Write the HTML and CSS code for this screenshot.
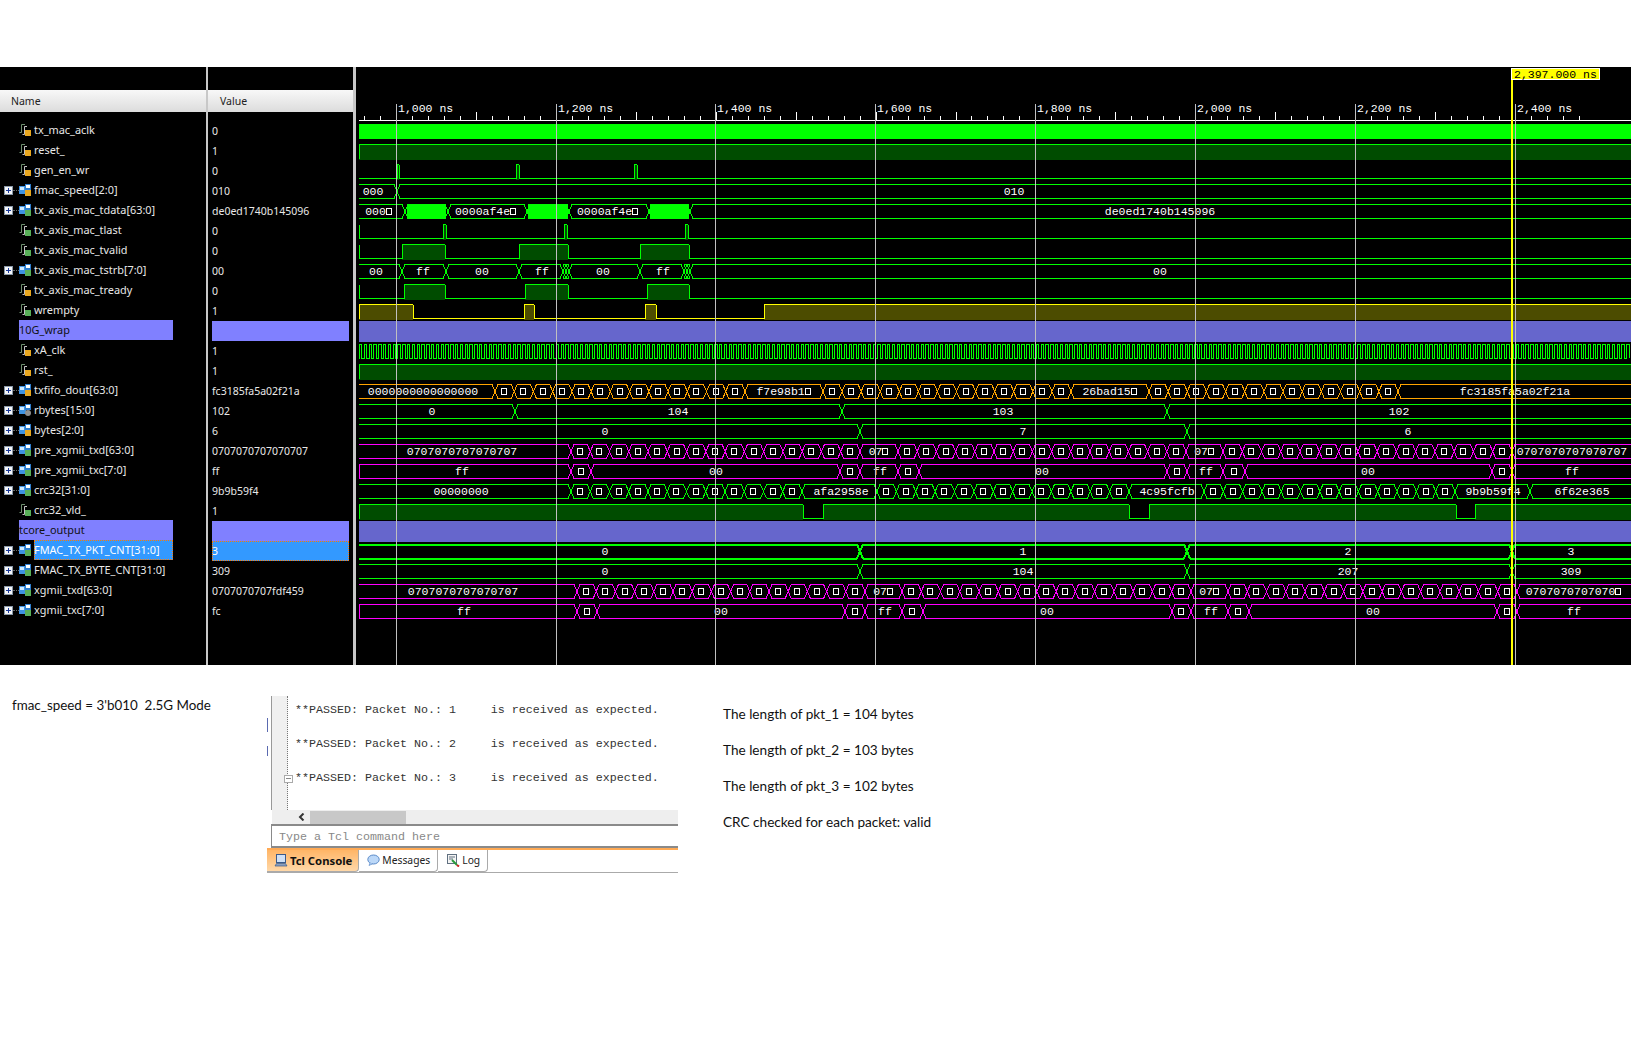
FILE: index.html
```html
<!DOCTYPE html>
<html lang="en">
<head>
  <meta charset="UTF-8">
  <title>Waveform - FMAC 2.5G Mode</title>
  <link rel="stylesheet" href="styles.css">
</head>
<body>
  <svg class="icon-defs" width="0" height="0">
    <defs>
      <symbol id="wire" viewBox="0 0 12 12">
        <path d="M0.5 8.5H2.5V0.5H6" fill="none" stroke="#6f8f6f" stroke-width="1"/>
        <path d="M3.5 10.5H5.5V2.5H8" fill="none" stroke="#c4c4c4" stroke-width="1"/>
      </symbol>
      <symbol id="bus" viewBox="0 0 12 12">
        <rect x="0" y="2" width="7" height="8" fill="#3f93e2"/>
        <rect x="1" y="3" width="4" height="3" fill="#cfeaff"/>
        <rect x="6" y="0" width="6" height="6" fill="#2f7fd0"/>
        <rect x="7" y="1" width="4" height="3" fill="#ffffff"/>
      </symbol>
    </defs>
  </svg>

  <div class="wave-window">
    <div class="signal-col name-col">
      <div class="col-header">Name</div>
      <div id="name-rows" class="rows"></div>
    </div>
    <div class="signal-col value-col">
      <div class="col-header">Value</div>
      <div id="value-rows" class="rows"></div>
    </div>
    <div id="wave-area" class="wave-area"></div>
  </div>

  <div class="notes">
    <div class="note-left">fmac_speed = 3'b010&nbsp; 2.5G Mode</div>

    <div class="console">
      <div class="console-output">
        <div class="gutter">
          <span class="bookmark bookmark-one"></span>
          <span class="bookmark bookmark-two"></span>
          <span class="fold"></span>
        </div>
        <pre class="console-text">**PASSED: Packet No.: 1     is received as expected.

**PASSED: Packet No.: 2     is received as expected.

**PASSED: Packet No.: 3     is received as expected.</pre>
      </div>
      <div class="h-scroll">
        <span class="h-scroll-arrow">
          <svg width="7" height="8" viewBox="0 0 7 8"><path d="M5.5 0.5L2 4L5.5 7.5" fill="none" stroke="#333" stroke-width="2"/></svg>
        </span>
        <span class="h-scroll-thumb"></span>
      </div>
      <div class="tcl-input">Type a Tcl command here</div>
      <div class="tabs">
        <div class="tab tab-active">
          <svg width="14" height="14" viewBox="0 0 14 14">
            <rect x="2.5" y="1.5" width="9" height="8" fill="#cfe0f5" stroke="#3a5a8a"/>
            <path d="M1 13L2.5 10.5H11.5L13 13Z" fill="#8aa0c0" stroke="#3a5a8a" stroke-width="0.7"/>
          </svg>
          Tcl Console
        </div>
        <div class="tab">
          <svg width="13" height="12" viewBox="0 0 13 12">
            <ellipse cx="6.5" cy="5.5" rx="5.7" ry="4.5" fill="#bcd8f8" stroke="#5a8ac8"/>
            <path d="M3 9L2 11.5L5.5 9.8" fill="#bcd8f8" stroke="#5a8ac8" stroke-width="0.7"/>
          </svg>
          Messages
        </div>
        <div class="tab">
          <svg width="14" height="14" viewBox="0 0 14 14">
            <rect x="1.5" y="1.5" width="9" height="9" fill="#f4f4f4" stroke="#607080"/>
            <path d="M3 4H9M3 6H7" stroke="#607080"/>
            <path d="M6 7L11 12" stroke="#2a9a3a" stroke-width="2"/>
            <path d="M11 12L13 13.5" stroke="#cc2222" stroke-width="2"/>
          </svg>
          Log
        </div>
      </div>
    </div>

    <div class="note-right">
      <p>The length of pkt_1 = 104 bytes</p>
      <p>The length of pkt_2 = 103 bytes</p>
      <p>The length of pkt_3 = 102 bytes</p>
      <p>CRC checked for each packet: valid</p>
    </div>
  </div>

  <script src="wave.js"></script>
</body>
</html>
```

FILE: styles.css
```css
body {
  margin: 0;
  background: white;
  color: #111;
  font-family: "Noto Sans", sans-serif;
}
.icon-defs {
  display: block;
  height: 0;
}

/* waveform window */
.wave-window {
  display: flex;
  width: 1631px;
  height: 598px;
  margin-top: 67px;
  background: black;
}
.signal-col {
  box-sizing: border-box;
  padding-top: 23px;
  border-right: 2px solid #c8c8c8;
  color: #e8e8e8;
  font-size: 10.5px;
}
.name-col {
  width: 208px;
  font-size: 10.9px;
}
.value-col {
  width: 148px;
  border-right: 3px solid #c8c8c8;
}
.col-header {
  height: 22px;
  padding-left: 11px;
  line-height: 22px;
  color: #222;
  font-size: 10.5px;
  background: linear-gradient(#f8f8f8, #dcdcdc);
  box-sizing: border-box;
}
.value-col .col-header {
  padding-left: 12px;
}
.rows {
  padding-top: 8px;
}
.row {
  display: flex;
  align-items: center;
  height: 20px;
  line-height: 20px;
  white-space: nowrap;
}
.name-row {
  padding-left: 4px;
}
.name-row.group {
  margin-left: 19px;
  margin-right: 33px;
  padding-left: 0;
  background: #8080ff;
  color: #111;
}
.value-row {
  margin: 1px 4px -1px 4px;
  padding-left: 0;
}
.value-row.group {
  background: #8080ff;
}
.value-row.selected {
  background: #3399ff;
  outline: 1px dotted #ff7a00;
  outline-offset: -1px;
  color: white;
}
.expander {
  position: relative;
  box-sizing: border-box;
  flex: none;
  width: 9px;
  height: 9px;
  border: 1px solid #8a98a8;
  background: #f4f6f8;
}
.expander::before,
.expander::after {
  content: "";
  position: absolute;
  background: #1a3a9a;
}
.expander::before {
  left: 1px;
  top: 3px;
  width: 5px;
  height: 1px;
}
.expander::after {
  left: 3px;
  top: 1px;
  width: 1px;
  height: 5px;
}
.dots {
  flex: none;
  width: 6px;
  border-top: 1px dotted #666;
}
.no-expander {
  flex: none;
  width: 15px;
}
.sig-icon {
  position: relative;
  flex: none;
  width: 12px;
  height: 12px;
  margin-right: 3px;
}
.sig-icon svg {
  display: block;
  width: 12px;
  height: 12px;
}
.badge {
  position: absolute;
  right: 0;
  bottom: 0;
  width: 6px;
  height: 6px;
}
.badge.in {
  background: #e8a820;
}
.badge.int {
  background: #58b058;
}
.badge.gear {
  border-radius: 50%;
  background: #909090;
}
.sig-label {
  padding: 0;
}
.name-row.selected .sig-label {
  box-sizing: border-box;
  height: 20px;
  width: 139px;
  background: #3399ff;
  outline: 1px dotted #ff7a00;
  outline-offset: -1px;
  color: white;
}
.wave-area {
  flex: 1;
  min-width: 0;
}
.wave-area svg {
  display: block;
}
.wave-text {
  fill: white;
  font-family: "Liberation Mono", monospace;
  font-size: 11.5px;
}
.cursor-text {
  fill: black;
  font-family: "Liberation Mono", monospace;
  font-size: 11.5px;
}

/* notes and console below the waves */
.notes {
  display: flex;
  align-items: flex-start;
  font-family: Lato, sans-serif;
  font-size: 13.6px;
}
.note-left {
  flex: none;
  box-sizing: border-box;
  width: 267px;
  padding: 31px 0 0 12px;
  font-size: 13.4px;
  line-height: 18px;
}
.console {
  flex: none;
  width: 411px;
  margin-top: 31px;
}
.console-output {
  display: flex;
  height: 114px;
}
.gutter {
  position: relative;
  flex: none;
  box-sizing: border-box;
  width: 17px;
  margin-left: 4px;
  border-left: 1px solid #999;
  border-right: 1px dotted #777;
  background: #f0f0f0;
}
.bookmark {
  position: absolute;
  left: -5px;
  width: 1px;
  background: #5a6ab0;
}
.bookmark-one {
  top: 22px;
  height: 14px;
}
.bookmark-two {
  top: 50px;
  height: 10px;
}
.fold {
  position: absolute;
  left: 12px;
  top: 79px;
  box-sizing: border-box;
  width: 9px;
  height: 8px;
  border: 1px solid #aaa;
  background: white;
}
.fold::after {
  content: "";
  position: absolute;
  left: 1px;
  top: 2px;
  width: 5px;
  height: 1px;
  background: #888;
}
.console-text {
  margin: 6px 0 0 7px;
  color: #333;
  font-family: "Liberation Mono", monospace;
  font-size: 11.67px;
  line-height: 17px;
}
.h-scroll {
  display: flex;
  align-items: center;
  height: 14px;
  margin-left: 5px;
  background: #eeeeee;
}
.h-scroll-arrow {
  display: flex;
  box-sizing: border-box;
  width: 38px;
  justify-content: flex-end;
  padding-right: 5px;
}
.h-scroll-thumb {
  width: 96px;
  height: 13px;
  background: #c8c8c8;
}
.tcl-input {
  box-sizing: border-box;
  height: 24px;
  margin-left: 4px;
  padding-left: 7px;
  border-top: 2px solid #8a8a8a;
  border-left: 1px solid #8a8a8a;
  border-bottom: 2px solid #8a8a8a;
  color: #888;
  font-family: "Liberation Mono", monospace;
  font-size: 11.67px;
  line-height: 22px;
}
.tabs {
  display: flex;
  height: 22px;
  border-top: 2px solid #ffaa55;
  border-bottom: 1px solid #aaa;
  font-family: "Noto Sans", sans-serif;
  font-size: 10.3px;
}
.tab {
  display: flex;
  align-items: center;
  gap: 2px;
  padding: 0 7px 1px 8px;
  border-right: 1px solid #aaa;
  border-bottom: 1px solid #aaa;
  border-bottom-right-radius: 4px;
  color: #222;
  background: white;
}
.tab-active {
  padding-left: 7px;
  padding-right: 6px;
  color: #111;
  font-weight: 700;
  font-size: 11.3px;
  background: linear-gradient(#ffb566, #ffd8a8);
}
.note-right {
  margin-left: 45px;
  padding-top: 40px;
}
.note-right p {
  margin: 0 0 18px;
  line-height: 18px;
}
```

FILE: wave.js
```js
// signal list: [name, value, kind, badge]
// kind: w = single bit, b = bus, g = group divider
const signals = [
  ['tx_mac_aclk', '0', 'w', 'in'],
  ['reset_', '1', 'w', 'in'],
  ['gen_en_wr', '0', 'w', 'in'],
  ['fmac_speed[2:0]', '010', 'b', 'in'],
  ['tx_axis_mac_tdata[63:0]', 'de0ed1740b145096', 'b', 'int'],
  ['tx_axis_mac_tlast', '0', 'w', 'int'],
  ['tx_axis_mac_tvalid', '0', 'w', 'int'],
  ['tx_axis_mac_tstrb[7:0]', '00', 'b', 'int'],
  ['tx_axis_mac_tready', '0', 'w', 'in'],
  ['wrempty', '1', 'w', 'int'],
  ['10G_wrap', '', 'g'],
  ['xA_clk', '1', 'w', 'in'],
  ['rst_', '1', 'w', 'in'],
  ['txfifo_dout[63:0]', 'fc3185fa5a02f21a', 'b', 'in'],
  ['rbytes[15:0]', '102', 'b', 'gear'],
  ['bytes[2:0]', '6', 'b', 'in'],
  ['pre_xgmii_txd[63:0]', '0707070707070707', 'b', 'int'],
  ['pre_xgmii_txc[7:0]', 'ff', 'b', 'int'],
  ['crc32[31:0]', '9b9b59f4', 'b', 'int'],
  ['crc32_vld_', '1', 'w', 'int'],
  ['tcore_output', '', 'g'],
  ['FMAC_TX_PKT_CNT[31:0]', '3', 'b', 'int', true],
  ['FMAC_TX_BYTE_CNT[31:0]', '309', 'b', 'int'],
  ['xgmii_txd[63:0]', '0707070707fdf459', 'b', 'int'],
  ['xgmii_txc[7:0]', 'fc', 'b', 'int'],
];

function el(tag, className, text) {
  const node = document.createElement(tag);
  if (className) node.className = className;
  if (text) node.textContent = text;
  return node;
}

function buildRows() {
  const names = document.getElementById('name-rows');
  const values = document.getElementById('value-rows');

  signals.forEach(([name, value, kind, badge, selected]) => {
    const row = el('div', 'row name-row');
    const val = el('div', 'row value-row', value);

    if (kind === 'g') {
      row.classList.add('group');
      val.classList.add('group');
      row.appendChild(el('span', 'sig-label', name));
    } else {
      if (kind === 'b') {
        row.appendChild(el('span', 'expander'));
        row.appendChild(el('span', 'dots'));
      } else {
        row.appendChild(el('span', 'no-expander'));
      }
      const icon = el('span', 'sig-icon');
      icon.innerHTML = `<svg><use href="#${kind === 'b' ? 'bus' : 'wire'}"/></svg>`;
      icon.appendChild(el('span', 'badge ' + badge));
      row.appendChild(icon);
      row.appendChild(el('span', 'sig-label', name));
    }
    if (selected) {
      row.classList.add('selected');
      val.classList.add('selected');
    }
    names.appendChild(row);
    values.appendChild(val);
  });
}

// waveform drawing, in page coordinates
const GREEN = '#00ff00';
const MAGENTA = '#ff00ff';
const ORANGE = '#ffa500';
const YELLOW = '#ffff00';
const DARK_GREEN = '#004c00';
const DARK_YELLOW = '#4c4c00';
const LEFT = 359;
const RIGHT = 1631;
const BOX = '\u25a1';
const CHAR_W = 6.9;
const GRID_X = [396, 556, 715, 875, 1035, 1195, 1355, 1515];

let svg = '';

const top_ = n => 124 + 20 * n;
const timeX = ns => 396.5 + (ns - 1000) * 0.7993;

function line(x1, y1, x2, y2, color, width) {
  svg += `<line x1="${x1}" y1="${y1}" x2="${x2}" y2="${y2}" stroke="${color}" stroke-width="${width || 1}"/>`;
}

function rect(x, y, w, h, color) {
  svg += `<rect x="${x}" y="${y}" width="${w}" height="${h}" fill="${color}"/>`;
}

function text(x, y, str, cls, anchor) {
  svg += `<text class="${cls || 'wave-text'}" x="${x}" y="${y}" text-anchor="${anchor || 'middle'}">${str}</text>`;
}

// the box the viewer prints when a value does not fit its cell
function box(x, n) {
  const bx = Math.round(x) + 0.5;
  svg += `<rect x="${bx}" y="${top_(n) + 4.5}" width="5" height="6" fill="none" stroke="white"/>`;
}

function busLabel(center, n, label) {
  if (!label.endsWith(BOX)) {
    text(center, top_(n) + 11, label);
    return;
  }
  const chars = label.slice(0, -1);
  const start = center - (chars.length + 1) * CHAR_W / 2;
  if (chars) text(start, top_(n) + 11, chars, 'wave-text', 'start');
  box(start + chars.length * CHAR_W, n);
}

// high/low signal, edges is the list of x where the level toggles
function bit(n, startHigh, edges, color, fill, noLeftEdge) {
  const y = top_(n) + 0.5;
  const bottom = y + 14;
  const xs = [LEFT, ...edges, RIGHT];
  let high = startHigh;
  for (let i = 0; i < xs.length - 1; i++) {
    if (high) {
      rect(xs[i], y, xs[i + 1] - xs[i], 15, fill);
      line(xs[i], y, xs[i + 1], y, color);
    } else {
      line(xs[i], bottom, xs[i + 1], bottom, color);
    }
    high = !high;
  }
  // edges go last, a fill would cover them otherwise
  if (!noLeftEdge) line(LEFT + 0.5, y, LEFT + 0.5, bottom, color);
  edges.forEach(x => line(x + 0.5, y, x + 0.5, bottom, color));
}

// equal cells holding the truncated-value box
function cells(from, to, count) {
  const out = [];
  for (let i = 0; i < count; i++) {
    out.push({ to: from + (to - from) * (i + 1) / count, label: BOX });
  }
  return out;
}

// bus row: list of {to, label, at} segments, run from LEFT towards RIGHT
function bus(n, segments, color, width, closedLeft) {
  const y = top_(n) + 0.5;
  const bottom = y + 14;
  const w = width || 1;
  const half = 3;
  let from = LEFT;
  if (closedLeft) line(LEFT + 0.5, y, LEFT + 0.5, bottom, color);
  segments.forEach((seg, i) => {
    const first = i === 0;
    const last = seg.to >= RIGHT;
    const a = first ? LEFT : from + half;
    const b = last ? RIGHT : seg.to - half;
    line(a, y, b, y, color, w);
    line(a, bottom, b, bottom, color, w);
    if (!last) {
      line(seg.to - half, y, seg.to + half, bottom, color, w);
      line(seg.to - half, bottom, seg.to + half, y, color, w);
    }
    if (seg.label) {
      busLabel(seg.at || (from + Math.min(seg.to, RIGHT)) / 2, n, seg.label);
    }
    from = seg.to;
  });
}

function s(to, label, at) {
  return { to, label, at };
}

function drawRuler() {
  line(359, 120.5, RIGHT, 120.5, 'white');
  for (let ns = 960; ns <= 2480; ns += 20) {
    const x = Math.floor(timeX(ns)) + 0.5;
    if (x < 359) continue;
    const major = ns % 100 === 0;
    line(x, major ? 112 : 116, x, 120, 'white');
  }
  GRID_X.forEach((x, i) => {
    text(x + 2, 112, `${(1000 + i * 200).toLocaleString('en-US')} ns`, 'wave-text', 'start');
  });
}

function drawWaves() {
  // row 0 is driven so fast it reads as a solid bar
  rect(LEFT, 124, RIGHT - LEFT, 15, GREEN);
  bit(1, true, [], GREEN, DARK_GREEN);
  bit(2, false, [397, 399, 516, 519, 634, 637], GREEN, DARK_GREEN, true);

  bus(3, [s(397, '000', 373), s(RIGHT, '010', 1014)], GREEN);

  bus(4, [s(405, '000' + BOX, 379), s(448), s(527, '0000af4e' + BOX, 486), s(569), s(649, '0000af4e' + BOX, 608), s(690), s(RIGHT, 'de0ed1740b145096', 1160)], GREEN);
  rect(407, 204, 39, 15, GREEN);
  rect(528, 204, 40, 15, GREEN);
  rect(650, 204, 39, 15, GREEN);

  bit(5, false, [443, 446, 564, 567, 685, 688], GREEN, DARK_GREEN);
  bit(6, false, [402, 445, 519, 568, 640, 689], GREEN, DARK_GREEN);

  bus(7, [s(402, '00', 376), s(446, 'ff', 423), s(519, '00', 482), s(563, 'ff', 542), s(566), s(569), s(640, '00', 603), s(684, 'ff', 663), s(687), s(690), s(RIGHT, '00', 1160)], GREEN);

  bit(8, false, [404, 445, 525, 568, 647, 689], GREEN, DARK_GREEN);
  bit(9, true, [413, 524, 534, 645, 656, 764], YELLOW, DARK_YELLOW);

  rect(LEFT, 321, RIGHT - LEFT, 21, '#6666cc');

  // xA_clk, aliased against the pixel grid
  let clk = 'M' + LEFT + ' 358';
  let level = 358;
  for (let x = LEFT; x < RIGHT; x += 2.4) {
    const px = Math.round(x) + 0.5;
    level = level === 358 ? 344 : 358;
    clk += `H${px}V${level}`;
  }
  svg += `<path d="${clk}" fill="none" stroke="${GREEN}"/>`;

  bit(12, true, [], GREEN, DARK_GREEN);

  bus(13, [
    s(495, '0000000000000000', 423),
    ...cells(495, 745, 13),
    s(823, 'f7e98b1' + BOX),
    ...cells(823, 1071, 13),
    s(1149, '26bad15' + BOX),
    ...cells(1149, 1398, 13),
    s(RIGHT, 'fc3185fa5a02f21a', 1515),
  ], ORANGE);

  bus(14, [s(515, '0', 432), s(842, '104', 678), s(1167, '103', 1003), s(RIGHT, '102', 1399)], GREEN);
  bus(15, [s(860, '0', 605), s(1187, '7', 1023), s(RIGHT, '6', 1408)], GREEN);

  bus(16, [
    s(571, '0707070707070707', 462),
    ...cells(571, 860, 15),
    s(898, '07' + BOX),
    ...cells(898, 1186, 15),
    s(1223, '07' + BOX),
    ...cells(1223, 1512, 15),
    s(RIGHT, '0707070707070707', 1572),
  ], MAGENTA);

  bus(17, [
    s(571, 'ff', 462), s(591, BOX), s(840, '00', 716), s(860, BOX), s(898, 'ff', 880),
    s(919, BOX), s(1167, '00', 1042), s(1187, BOX), s(1223, 'ff', 1206), s(1245, BOX),
    s(1492, '00', 1368), s(1512, BOX), s(RIGHT, 'ff', 1572),
  ], MAGENTA, 1, true);

  bus(18, [
    s(571, '00000000', 461),
    ...cells(571, 802, 12),
    s(877, 'afa2958e', 841),
    ...cells(877, 1129, 13),
    s(1204, '4c95fcfb', 1167),
    ...cells(1204, 1455, 13),
    s(1530, '9b9b59f4', 1493),
    s(RIGHT, '6f62e365', 1582),
  ], GREEN);

  bit(19, true, [803, 823, 1129, 1149, 1456, 1475], GREEN, DARK_GREEN);

  rect(LEFT, 521, RIGHT - LEFT, 21, '#6666cc');

  bus(21, [s(860, '0', 605), s(1187, '1', 1023), s(1512, '2', 1348), s(RIGHT, '3', 1571)], GREEN, 2);
  bus(22, [s(860, '0', 605), s(1187, '104', 1023), s(1512, '207', 1348), s(RIGHT, '309', 1571)], GREEN);

  bus(23, [
    s(577, '0707070707070707', 463),
    ...cells(577, 865, 15),
    s(902, '07' + BOX),
    ...cells(902, 1191, 15),
    s(1228, '07' + BOX),
    ...cells(1228, 1517, 15),
    s(RIGHT, '0707070707070' + BOX, 1574),
  ], MAGENTA);

  bus(24, [
    s(577, 'ff', 464), s(597, BOX), s(845, '00', 721), s(865, BOX), s(902, 'ff', 885),
    s(923, BOX), s(1172, '00', 1047), s(1191, BOX), s(1228, 'ff', 1211), s(1249, BOX),
    s(1497, '00', 1373), s(1517, BOX), s(RIGHT, 'ff', 1574),
  ], MAGENTA, 1, true);
}

function drawGrid() {
  GRID_X.forEach(x => line(x + 0.5, 104, x + 0.5, 665, '#c0c0c0'));
}

function drawCursor() {
  rect(1511, 80, 2, 585, YELLOW);
  rect(1511, 68, 89, 12, 'white');
  rect(1512, 69, 87, 10, YELLOW);
  text(1514, 78, '2,397.000 ns', 'cursor-text', 'start');
}

buildRows();
drawRuler();
drawWaves();
drawGrid();
drawCursor();

document.getElementById('wave-area').innerHTML =
  `<svg width="1275" height="598" viewBox="356 67 1275 598" shape-rendering="crispEdges">${svg}</svg>`;
```
